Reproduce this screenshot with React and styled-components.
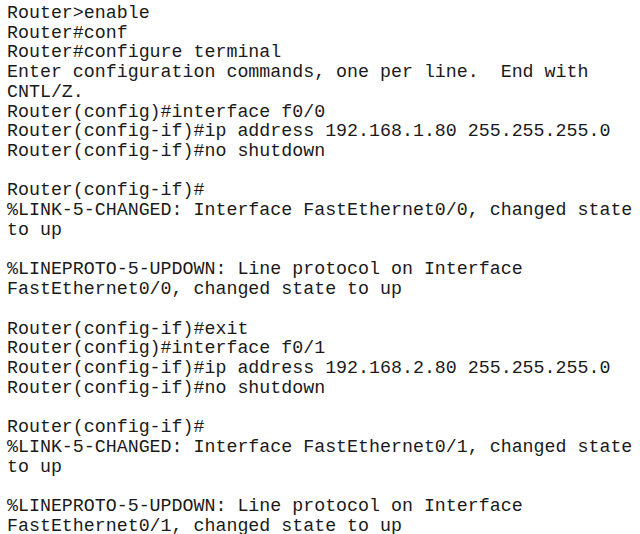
import React from "react";
import styled, { createGlobalStyle } from "styled-components";

const GlobalStyle = createGlobalStyle`
  html, body {
    margin: 0;
    padding: 0;
    background: #ffffff;
  }
`;

const Terminal = styled.div`
  width: 640px;
  height: 534px;
  box-sizing: border-box;
  padding: 4px 0 0 7px;
  background: #ffffff;
  overflow: hidden;
`;

const Line = styled.pre`
  margin: 0;
  height: 19.73px;
  font-family: "Liberation Mono", "Courier New", monospace;
  font-size: 18.3px;
  line-height: 19.73px;
  color: #1a1a1a;
  white-space: pre;
`;

const lines = [
  "Router>enable",
  "Router#conf",
  "Router#configure terminal",
  "Enter configuration commands, one per line.  End with",
  "CNTL/Z.",
  "Router(config)#interface f0/0",
  "Router(config-if)#ip address 192.168.1.80 255.255.255.0",
  "Router(config-if)#no shutdown",
  "",
  "Router(config-if)#",
  "%LINK-5-CHANGED: Interface FastEthernet0/0, changed state",
  "to up",
  "",
  "%LINEPROTO-5-UPDOWN: Line protocol on Interface",
  "FastEthernet0/0, changed state to up",
  "",
  "Router(config-if)#exit",
  "Router(config)#interface f0/1",
  "Router(config-if)#ip address 192.168.2.80 255.255.255.0",
  "Router(config-if)#no shutdown",
  "",
  "Router(config-if)#",
  "%LINK-5-CHANGED: Interface FastEthernet0/1, changed state",
  "to up",
  "",
  "%LINEPROTO-5-UPDOWN: Line protocol on Interface",
  "FastEthernet0/1, changed state to up",
];

const App = () => (
  <>
    <GlobalStyle />
    <Terminal>
      {lines.map((text, i) => (
        <Line key={i}>{text}</Line>
      ))}
    </Terminal>
  </>
);

export default App;
